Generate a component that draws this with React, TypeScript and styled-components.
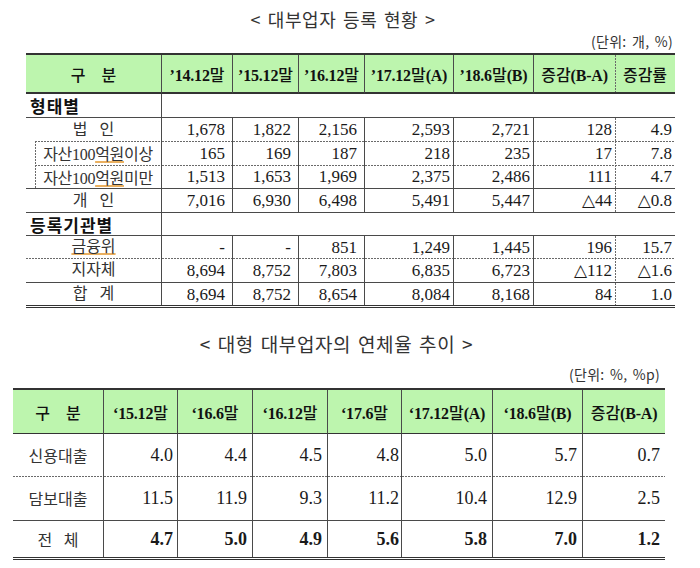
import React from 'react';
import styled, { createGlobalStyle } from 'styled-components';

const Global = createGlobalStyle`
  html, body { margin: 0; padding: 0; background: #fff; }
  body {
    width: 700px;
    height: 568px;
    overflow: hidden;
    font-family: "Liberation Serif", "Noto Sans CJK KR", serif;
    color: #222;
  }
`;

const SOLID = '1px solid #4a4a4a';
const HDOTS = 'linear-gradient(to right, #6a6a6a 2px, rgba(255,255,255,0) 2px)';
const VDOTS = 'linear-gradient(to bottom, #6a6a6a 2px, rgba(255,255,255,0) 2px)';

const Page = styled.div`
  width: 700px;
  height: 568px;
  display: flex;
  flex-direction: column;
  background: #fff;
`;

const Title = styled.div<{ $size: number; $shift: number; $mt: number }>`
  font-family: "Noto Sans CJK KR", "Noto Sans", sans-serif;
  font-size: ${p => p.$size}px;
  color: #333;
  height: 30px;
  line-height: 30px;
  margin-top: ${p => p.$mt}px;
  text-align: center;
  padding-right: ${p => p.$shift}px;
  letter-spacing: 0.6px;
  word-spacing: 2px;
  white-space: nowrap;
`;

const Unit = styled.div<{ $size: number; $pr: number; $mt: number }>`
  font-family: "Noto Sans CJK KR", "Noto Sans", sans-serif;
  font-size: ${p => p.$size}px;
  color: #333;
  height: 14px;
  line-height: 14px;
  margin-top: ${p => p.$mt}px;
  text-align: right;
  padding-right: ${p => p.$pr}px;
  white-space: nowrap;
  letter-spacing: 0.3px;
  word-spacing: 2px;
`;

const Table = styled.table<{ $ml: number; $mt: number; $w: number }>`
  border-collapse: separate;
  border-spacing: 0;
  table-layout: fixed;
  width: ${p => p.$w}px;
  margin-left: ${p => p.$ml}px;
  margin-top: ${p => p.$mt}px;
  border-top: 2px solid #333;
  border-bottom: 3px double #333;
`;

const HeadRow = styled.tr<{ $h: number; $bottom: number }>`
  height: ${p => p.$h}px;
  & > th { border-bottom: ${p => p.$bottom}px solid #333; }
`;

const HeadCell = styled.th<{ $dotted?: boolean }>`
  background-color: #bdf5ae;
  background-image: ${p => (p.$dotted ? VDOTS : 'none')};
  background-size: 1px 3px;
  background-repeat: repeat-y;
  background-position: 0 0;
  padding: 0;
  font-family: "Liberation Serif", "Noto Sans CJK KR", serif;
  font-weight: bold;
  font-size: 16px;
  color: #111;
  text-align: center;
  white-space: nowrap;
  letter-spacing: -0.2px;
  border-left: ${p => (p.$dotted ? 'none' : SOLID)};
  &:first-child { border-left: none; }
`;

const KoHead = styled.span`
  font-family: "Noto Sans CJK KR", sans-serif;
  font-weight: 500;
  letter-spacing: 0;
`;

const Row = styled.tr<{ $h: number; $line: 'solid' | 'dotted' | 'none' }>`
  height: ${p => p.$h}px;
  & > td {
    border-top: ${p => (p.$line === 'solid' ? SOLID : 'none')};
    --top-dots: ${p => (p.$line === 'dotted' ? HDOTS : 'none')};
  }
`;

const Num = styled.td<{ $dotted?: boolean; $bold?: boolean; $size: number; $pr: number }>`
  padding: 0 ${p => p.$pr}px 0 0;
  font-family: "Liberation Serif", "DejaVu Serif", serif;
  font-size: ${p => p.$size}px;
  font-weight: ${p => (p.$bold ? 'bold' : 'normal')};
  color: #1a1a1a;
  text-align: right;
  white-space: nowrap;
  line-height: 1;
  border-left: ${p => (p.$dotted ? 'none' : SOLID)};
  background-image: var(--top-dots, none), ${p => (p.$dotted ? VDOTS : 'none')};
  background-size: 3px 1px, 1px 3px;
  background-repeat: repeat-x, repeat-y;
  background-position: 0 0, 0 0;
`;

const Label = styled.td<{ $sans?: boolean; $size: number }>`
  padding: 0;
  font-family: ${p =>
    p.$sans ? '"Noto Sans CJK KR", sans-serif' : '"Liberation Serif", "Noto Sans CJK KR", serif'};
  font-size: ${p => p.$size}px;
  color: #333;
  text-align: center;
  white-space: nowrap;
  line-height: 1;
  word-spacing: 8px;
  background-image: var(--top-dots, none);
  background-size: 3px 1px;
  background-repeat: repeat-x;
  background-position: 0 0;
`;

const GroupLabel = styled.td`
  padding: 0 0 0 4px;
  font-family: "Noto Sans CJK KR", sans-serif;
  font-weight: bold;
  font-size: 17px;
  color: #111;
  text-align: left;
  white-space: nowrap;
  line-height: 1;
  letter-spacing: 1px;
`;

const Blank = styled.td`
  padding: 0;
  border-left: ${SOLID};
`;

const SubLabelCell = styled.td`
  padding: 0 0 0 9px;
  vertical-align: top;
`;

const SubLabelBox = styled.div<{ $h: number }>`
  height: ${p => p.$h}px;
  box-sizing: border-box;
  background-image: ${HDOTS}, ${VDOTS};
  background-size: 3px 1px, 1px 3px;
  background-repeat: repeat-x, repeat-y;
  background-position: 0 0, 0 0;
  display: flex;
  align-items: center;
  justify-content: center;
  font-family: "Liberation Serif", "Noto Sans CJK KR", serif;
  font-size: 16px;
  color: #333;
  white-space: nowrap;
  letter-spacing: -0.3px;
`;

const Squiggle = styled.span`
  text-decoration-line: underline;
  text-decoration-style: solid;
  text-decoration-color: #eab060;
  text-decoration-thickness: 2px;
  text-underline-offset: 1px;
`;

type R1 = {
  label: React.ReactNode;
  vals: string[];
  line: 'solid' | 'dotted';
  h: number;
  sub?: boolean;
};

const t1Cols = [135, 71, 66, 66, 89, 80, 82, 60];
const t2Cols = [90, 74, 75, 75, 74, 91, 90, 83];

const t1Head: React.ReactNode[] = [
  <KoHead key="a">구　분</KoHead>,
  <>’14.12<KoHead>말</KoHead></>,
  <>’15.12<KoHead>말</KoHead></>,
  <>’16.12<KoHead>말</KoHead></>,
  <>’17.12<KoHead>말</KoHead>(A)</>,
  <>’18.6<KoHead>말</KoHead>(B)</>,
  <><KoHead>증감</KoHead>(B-A)</>,
  <KoHead key="z">증감률</KoHead>,
];

const group1: R1[] = [
  { label: '법 인', vals: ['1,678', '1,822', '2,156', '2,593', '2,721', '128', '4.9'], line: 'solid', h: 24 },
  {
    label: <>자산100<Squiggle>억원</Squiggle>이상</>,
    vals: ['165', '169', '187', '218', '235', '17', '7.8'],
    line: 'dotted',
    h: 24,
    sub: true,
  },
  {
    label: <>자산100<Squiggle>억원</Squiggle>미만</>,
    vals: ['1,513', '1,653', '1,969', '2,375', '2,486', '111', '4.7'],
    line: 'dotted',
    h: 23,
    sub: true,
  },
  { label: '개 인', vals: ['7,016', '6,930', '6,498', '5,491', '5,447', '△44', '△0.8'], line: 'solid', h: 24 },
];

const group2: R1[] = [
  { label: <Squiggle>금융위</Squiggle>, vals: ['-', '-', '851', '1,249', '1,445', '196', '15.7'], line: 'solid', h: 23 },
  { label: '지자체', vals: ['8,694', '8,752', '7,803', '6,835', '6,723', '△112', '△1.6'], line: 'dotted', h: 24 },
  { label: '합 계', vals: ['8,694', '8,752', '8,654', '8,084', '8,168', '84', '1.0'], line: 'solid', h: 23 },
];

const t1Pad = [7, 7, 7, 3, 3, 3, 3];

const Table1Row: React.FC<{ r: R1 }> = ({ r }) => (
  <Row $h={r.h} $line={r.line}>
    {r.sub ? (
      <SubLabelCell>
        <SubLabelBox $h={r.h}>{r.label}</SubLabelBox>
      </SubLabelCell>
    ) : (
      <Label $size={16}>{r.label}</Label>
    )}
    {r.vals.map((v, i) => (
      <Num key={i} $size={17} $pr={t1Pad[i]} $dotted={i === 6}>
        {v}
      </Num>
    ))}
  </Row>
);

const t2Head: React.ReactNode[] = [
  <KoHead key="a">구　분</KoHead>,
  <>‘15.12<KoHead>말</KoHead></>,
  <>‘16.6<KoHead>말</KoHead></>,
  <>‘16.12<KoHead>말</KoHead></>,
  <>‘17.6<KoHead>말</KoHead></>,
  <>‘17.12<KoHead>말</KoHead>(A)</>,
  <>‘18.6<KoHead>말</KoHead>(B)</>,
  <><KoHead>증감</KoHead>(B-A)</>,
];

type R2 = { label: string; vals: string[]; line: 'solid' | 'dotted'; h: number; bold?: boolean };

const t2Rows: R2[] = [
  { label: '신용대출', vals: ['4.0', '4.4', '4.5', '4.8', '5.0', '5.7', '0.7'], line: 'solid', h: 42 },
  { label: '담보대출', vals: ['11.5', '11.9', '9.3', '11.2', '10.4', '12.9', '2.5'], line: 'dotted', h: 44 },
  { label: '전 체', vals: ['4.7', '5.0', '4.9', '5.6', '5.8', '7.0', '1.2'], line: 'solid', h: 37, bold: true },
];

const t2Pad = [4, 5, 5, 2, 5, 5, 5];

export default function App() {
  return (
    <Page>
      <Global />
      <Title $size={18} $shift={14} $mt={4}>
        &lt; 대부업자 등록 현황 &gt;
      </Title>
      <Unit $size={14} $pr={27} $mt={0}>
        (단위: 개, %)
      </Unit>
      <Table $ml={26} $mt={5} $w={649}>
        <colgroup>
          {t1Cols.map((w, i) => (
            <col key={i} style={{ width: w }} />
          ))}
        </colgroup>
        <thead>
          <HeadRow $h={39} $bottom={2}>
            {t1Head.map((h, i) => (
              <HeadCell key={i} $dotted={i === 7}>
                {h}
              </HeadCell>
            ))}
          </HeadRow>
        </thead>
        <tbody>
          <Row $h={23} $line="none">
            <GroupLabel>형태별</GroupLabel>
            <Blank colSpan={7} />
          </Row>
          {group1.map((r, i) => (
            <Table1Row key={i} r={r} />
          ))}
          <Row $h={23} $line="solid">
            <GroupLabel>등록기관별</GroupLabel>
            <Blank colSpan={7} />
          </Row>
          {group2.map((r, i) => (
            <Table1Row key={i} r={r} />
          ))}
        </tbody>
      </Table>
      <Title $size={19} $shift={27} $mt={21}>
        &lt; 대형 대부업자의 연체율 추이 &gt;
      </Title>
      <Unit $size={14} $pr={40} $mt={8}>
        (단위: %, %p)
      </Unit>
      <Table $ml={13} $mt={7} $w={652}>
        <colgroup>
          {t2Cols.map((w, i) => (
            <col key={i} style={{ width: w }} />
          ))}
        </colgroup>
        <thead>
          <HeadRow $h={44} $bottom={1}>
            {t2Head.map((h, i) => (
              <HeadCell key={i}>{h}</HeadCell>
            ))}
          </HeadRow>
        </thead>
        <tbody>
          {t2Rows.map((r, ri) => (
            <Row key={ri} $h={r.h} $line={ri === 0 ? 'none' : r.line}>
              <Label $sans $size={16}>
                {r.label}
              </Label>
              {r.vals.map((v, i) => (
                <Num key={i} $size={18} $pr={t2Pad[i]} $bold={r.bold}>
                  {v}
                </Num>
              ))}
            </Row>
          ))}
        </tbody>
      </Table>
    </Page>
  );
}
